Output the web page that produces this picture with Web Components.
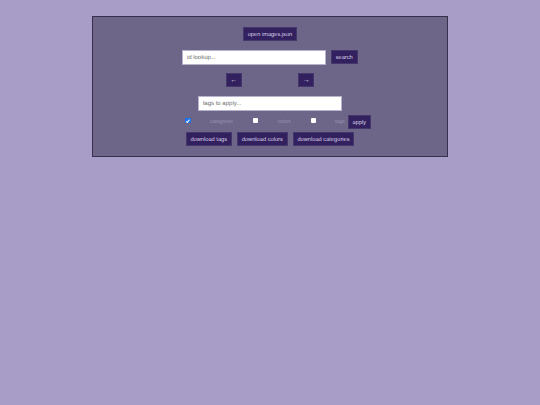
<!DOCTYPE html>
<html lang="en">
<head>
<meta charset="utf-8">
<title>image tagger</title>
<style>
  html, body { margin: 0; height: 100%; background: #a89dc6; }
  body { font-family: "Liberation Sans", Arial, sans-serif; padding-top: 16px; box-sizing: border-box; }
</style>
</head>
<body>
<app-panel>
  <app-row style="--gap:0">
    <app-button>open images.json</app-button>
  </app-row>
  <app-row style="--gap:5px">
    <app-input placeholder="id lookup..."></app-input>
    <app-button>search</app-button>
  </app-row>
  <app-row style="--gap:56.6px">
    <app-button arrow>←</app-button>
    <app-button arrow>→</app-button>
  </app-row>
  <app-row style="--gap:0">
    <app-input placeholder="tags to apply..."></app-input>
  </app-row>
  <app-row style="--gap:3px;--mt:5px">
    <app-check label="categories" checked style="--before:16.3px"></app-check>
    <app-check label="colors"></app-check>
    <app-check label="tags"></app-check>
    <app-button>apply</app-button>
  </app-row>
  <app-row style="--gap:5px;--mt:3px">
    <app-button>download tags</app-button>
    <app-button>download colors</app-button>
    <app-button>download categories</app-button>
  </app-row>
</app-panel>

<script>
const panelTemplate = document.createElement('template');
panelTemplate.innerHTML = `
  <style>
    :host {
      display: flex;
      flex-direction: column;
      gap: 9px;
      box-sizing: border-box;
      width: 356px;
      height: 141px;
      margin: 0 auto;
      padding: 10px 0;
      background: #6e6689;
      border: 1px solid #37304d;
    }
  </style>
  <slot></slot>
`;

class AppPanel extends HTMLElement {
  constructor() {
    super();
    this.attachShadow({ mode: 'open' });
    this.shadowRoot.appendChild(panelTemplate.content.cloneNode(true));
  }
}

const rowTemplate = document.createElement('template');
rowTemplate.innerHTML = `
  <style>
    :host {
      display: flex;
      justify-content: center;
      align-items: flex-start;
      gap: var(--gap, 5px);
      height: 14px;
      margin-top: calc(var(--mt, 9px) - 9px);
    }
  </style>
  <slot></slot>
`;

class AppRow extends HTMLElement {
  constructor() {
    super();
    this.attachShadow({ mode: 'open' });
    this.shadowRoot.appendChild(rowTemplate.content.cloneNode(true));
  }
}

const buttonTemplate = document.createElement('template');
buttonTemplate.innerHTML = `
  <style>
    :host { display: inline-flex; }
    button {
      box-sizing: border-box;
      height: 14px;
      padding: 1px 3.8px 0;
      background: #33215f;
      color: #d9d3e8;
      border: 1px solid #43376b;
      font: 5.7px "Liberation Sans", Arial, sans-serif;
      text-rendering: geometricPrecision;
      white-space: nowrap;
      cursor: pointer;
    }
    :host([arrow]) button {
      width: 16px;
      padding: 0;
      font-size: 7px;
    }
  </style>
  <button><slot></slot></button>
`;

class AppButton extends HTMLElement {
  constructor() {
    super();
    this.attachShadow({ mode: 'open' });
    this.shadowRoot.appendChild(buttonTemplate.content.cloneNode(true));
  }
}

const inputTemplate = document.createElement('template');
inputTemplate.innerHTML = `
  <style>
    :host { display: inline-flex; }
    input {
      box-sizing: border-box;
      width: 143.4px;
      height: 14.5px;
      padding: 1px 3.4px 0;
      background: #fff;
      border: 1px solid #b9b2cd;
      font: 6px "Liberation Sans", Arial, sans-serif;
      text-rendering: geometricPrecision;
      outline: none;
    }
    input::placeholder { color: #6f6f6f; opacity: 1; }
  </style>
  <input type="text">
`;

class AppInput extends HTMLElement {
  constructor() {
    super();
    this.attachShadow({ mode: 'open' });
    this.shadowRoot.appendChild(inputTemplate.content.cloneNode(true));
    this.shadowRoot.querySelector('input').placeholder = this.getAttribute('placeholder') || '';
  }
}

const checkTemplate = document.createElement('template');
checkTemplate.innerHTML = `
  <style>
    :host {
      display: inline-flex;
      align-items: center;
      gap: 19.4px;
      height: 14px;
      margin-left: var(--before, 16.8px);
      color: #9c94b5;
      font: 5px "Liberation Sans", Arial, sans-serif;
      text-rendering: geometricPrecision;
    }
    input {
      appearance: none;
      position: relative;
      box-sizing: border-box;
      width: 5.3px;
      height: 5.3px;
      margin: 0 0 2.6px;
      background: #fff;
      border-radius: 1px;
    }
    input:checked { background: #1a73e8; }
    input:checked::after {
      content: '';
      position: absolute;
      left: 1.7px;
      top: 0.5px;
      width: 1.2px;
      height: 2.6px;
      border: solid #fff;
      border-width: 0 0.8px 0.8px 0;
      transform: rotate(40deg);
    }
  </style>
  <input type="checkbox">
  <span></span>
`;

class AppCheck extends HTMLElement {
  constructor() {
    super();
    this.attachShadow({ mode: 'open' });
    this.shadowRoot.appendChild(checkTemplate.content.cloneNode(true));
    this.shadowRoot.querySelector('span').textContent = this.getAttribute('label');
    this.shadowRoot.querySelector('input').checked = this.hasAttribute('checked');
  }
}

customElements.define('app-panel', AppPanel);
customElements.define('app-row', AppRow);
customElements.define('app-button', AppButton);
customElements.define('app-input', AppInput);
customElements.define('app-check', AppCheck);
</script>
</body>
</html>
